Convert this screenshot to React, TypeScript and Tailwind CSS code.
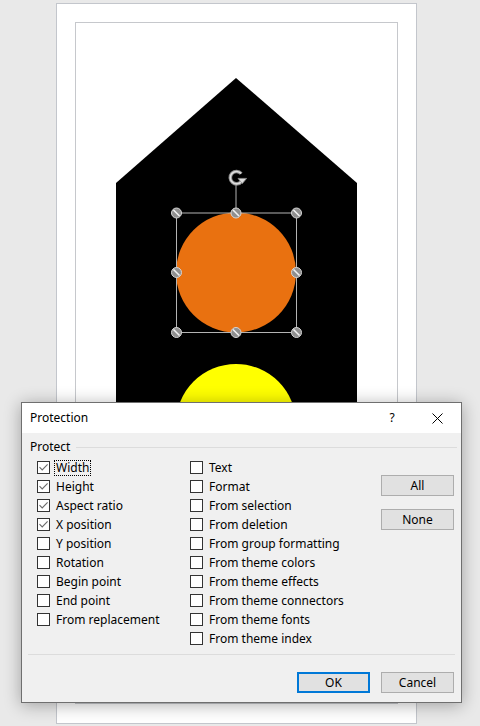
import React from 'react';

const LEFT_ITEMS = [
  { label: 'Width', checked: true, focus: true },
  { label: 'Height', checked: true },
  { label: 'Aspect ratio', checked: true },
  { label: 'X position', checked: true },
  { label: 'Y position', checked: false },
  { label: 'Rotation', checked: false },
  { label: 'Begin point', checked: false },
  { label: 'End point', checked: false },
  { label: 'From replacement', checked: false },
];

const RIGHT_ITEMS = [
  'Text',
  'Format',
  'From selection',
  'From deletion',
  'From group formatting',
  'From theme colors',
  'From theme effects',
  'From theme connectors',
  'From theme fonts',
  'From theme index',
];

const HANDLES: [number, number][] = [
  [176.5, 213], [236, 213], [296.5, 213],
  [176.5, 272.5], [296.5, 272.5],
  [176.5, 332.5], [236, 332.5], [296.5, 332.5],
];

interface CheckRowProps {
  label: string;
  checked?: boolean;
  focus?: boolean;
}

const CheckRow: React.FC<CheckRowProps> = ({ label, checked = false, focus = false }) => (
  <div className="flex items-center h-[19px]">
    <span className="w-[13px] h-[13px] border border-[#333333] bg-white flex items-center justify-center shrink-0">
      {checked && (
        <svg width="11" height="11" viewBox="0 0 11 11">
          <path d="M1.5 5.2 L4.2 8 L9.6 2.4" stroke="#6b6b6b" strokeWidth="1.1" fill="none" />
        </svg>
      )}
    </span>
    <span
      className={`ml-[5px] px-px leading-[14px] whitespace-nowrap ${
        focus ? 'outline outline-1 outline-dotted outline-black' : ''
      }`}
    >
      {label}
    </span>
  </div>
);

const DialogButton: React.FC<{ label: string; primary?: boolean }> = ({ label, primary }) => (
  <button
    className={`w-[73px] h-[21px] bg-[#e1e1e1] flex items-center justify-center text-[12px] text-black ${
      primary ? 'border-2 border-[#0078d7]' : 'border border-[#adadad]'
    }`}
  >
    {label}
  </button>
);

function SlideDrawing() {
  return (
    <svg
      className="absolute -left-px -top-px"
      width="361"
      height="721"
      viewBox="56 3 361 721"
    >
      <polygon points="116,183 236,78 357,183 357,698 116,698" fill="#000" />
      <circle cx="236" cy="424" r="60" fill="#ffff00" />
      <circle cx="236" cy="272.5" r="60" fill="#e97110" />
      {/* selection frame */}
      <rect x="176.5" y="213" width="120" height="119.5" fill="none" stroke="#b3b3b3" strokeWidth="1" />
      <line x1="236" y1="184" x2="236" y2="213" stroke="#b3b3b3" strokeWidth="1" />
      {/* rotate handle */}
      <path d="M241.2 173.6 A6.2 6.2 0 1 0 241.6 181.2" fill="none" stroke="#8e8e8e" strokeWidth="3.6" />
      <path d="M241.2 173.6 A6.2 6.2 0 1 0 241.6 181.2" fill="none" stroke="#dedede" strokeWidth="1.6" />
      <polygon points="238,178.4 246.6,178.4 242.3,183.6" fill="#dedede" stroke="#8e8e8e" strokeWidth="0.8" />
      {HANDLES.map(([x, y], i) => (
        <g key={i}>
          <circle cx={x} cy={y} r="5" fill="#8f8f8f" stroke="#d6d6d6" strokeWidth="1" />
          <line x1={x - 3} y1={y - 3} x2={x + 3} y2={y + 3} stroke="#f2f2f2" strokeWidth="1.6" />
        </g>
      ))}
    </svg>
  );
}

export default function App() {
  return (
    <div
      className="relative w-[480px] h-[726px] overflow-hidden bg-[#e9e9e9] pl-[56px] pt-[3px] text-[12px] text-black"
      style={{ fontFamily: '"Noto Sans", "Open Sans", sans-serif' }}
    >
      {/* page */}
      <div className="relative w-[361px] h-[721px] bg-white border border-[#c3c6cc]">
        <div className="ml-[18px] mt-[18px] w-[323px] h-[682px] border border-[#c6c8cc]" />
        <SlideDrawing />
      </div>

      {/* Protection dialog */}
      <div className="absolute left-[21px] top-[402px] w-[441px] h-[301px] flex flex-col border border-[#6f6f6f] bg-[#f0f0f0] shadow-[0_2px_16px_rgba(0,0,0,0.32)]">
        <div className="h-[30px] shrink-0 bg-white flex items-center pl-[8px]">
          <span className="flex-1">Protection</span>
          <span className="w-[10px] text-center mr-[35px]">?</span>
          <svg width="11" height="11" viewBox="0 0 11 11" className="mr-[18px]">
            <path d="M0.5 0.5 L10.5 10.5 M10.5 0.5 L0.5 10.5" stroke="#000" strokeWidth="1" />
          </svg>
        </div>

        <div className="flex-1 flex flex-col">
          <div className="flex items-center h-[16px] mt-[6px] pl-[8px] pr-[4px]">
            <span>Protect</span>
            <span className="flex-1 h-px bg-[#dcdcdc] ml-[6px]" />
          </div>

          <div className="flex pl-[15px] mt-[3px]">
            <div className="w-[153px] flex flex-col">
              {LEFT_ITEMS.map((item) => (
                <CheckRow key={item.label} label={item.label} checked={item.checked} focus={item.focus} />
              ))}
            </div>
            <div className="w-[191px] flex flex-col">
              {RIGHT_ITEMS.map((label) => (
                <CheckRow key={label} label={label} />
              ))}
            </div>
            <div className="flex flex-col gap-[13px] pt-[17px]">
              <DialogButton label="All" />
              <DialogButton label="None" />
            </div>
          </div>

          <div className="mx-[6px] mt-[6px] h-px bg-[#dcdcdc]" />

          <div className="flex justify-end gap-[11px] pr-[7px] mt-[17px]">
            <DialogButton label="OK" primary />
            <DialogButton label="Cancel" />
          </div>
        </div>
      </div>
    </div>
  );
}
